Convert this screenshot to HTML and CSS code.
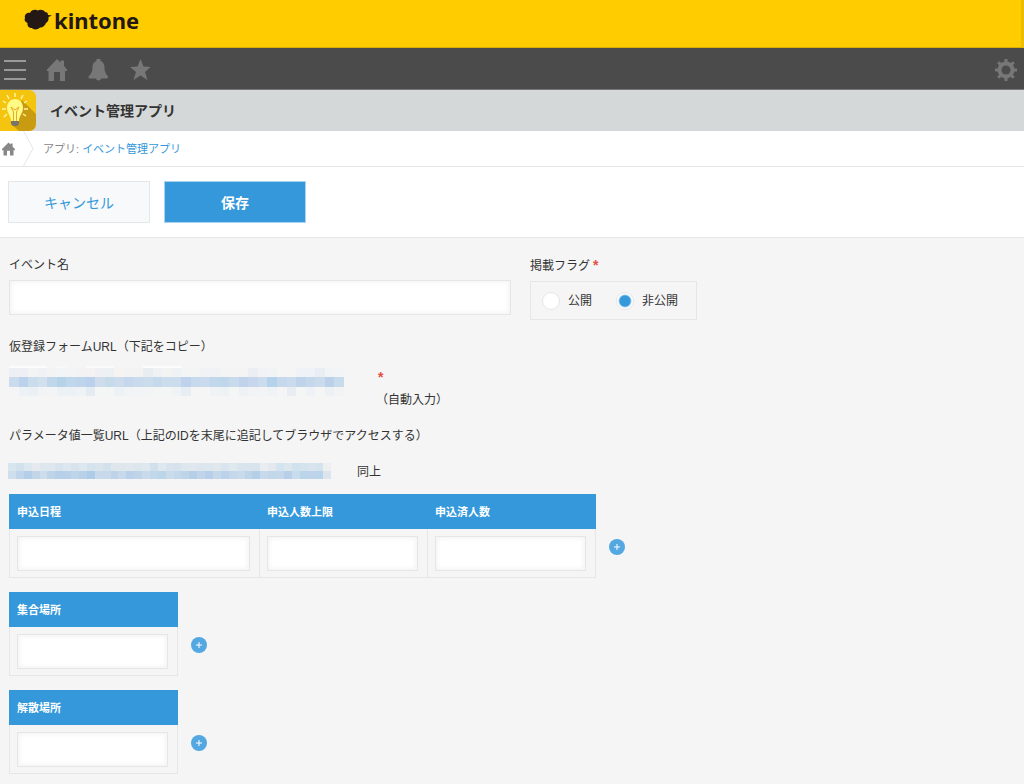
FILE: index.html
```html
<!DOCTYPE html>
<html lang="ja">
<head>
<meta charset="utf-8">
<title>イベント管理アプリ - kintone</title>
<link rel="stylesheet" href="styles.css">
</head>
<body>
<header class="brand">
  <a class="logo" href="#">
    <svg class="cloud" width="28" height="22" viewBox="0 0 28 22" aria-hidden="true"><path d="M1 9C0 6 3 3 6 4C7 1 11 0 14 1.500C16 0 20 1 21 3C23 3 24 4 24 6L28 6.500L24.500 8C25 10 24 13 22 14C21 17 18 19 16 18.500C14 21 9 21 8 19C5 19 3 17 3.500 14C1 13 0 11 1 9Z"/></svg>
    <span>kintone</span>
  </a>
</header>
<nav class="toolbar" aria-label="メイン">
  <div class="tools">
    <button class="tool" type="button" aria-label="メニュー"><svg class="menu" width="22" height="22" viewBox="0 0 22 22"><path d="M0 2H22M0 11H22M0 20H22"/></svg></button>
    <button class="tool" type="button" aria-label="ホーム"><svg width="22" height="22" viewBox="0 0 22 22"><path d="M11 0L14.500 3.500V1.500H18V7L21 10.500V12H19V22H14V13H8V22H2.500V12H1V10.500Z"/></svg></button>
    <button class="tool" type="button" aria-label="通知"><svg width="22" height="22" viewBox="0 0 22 22"><path d="M8.500 2V0H12.500V2C16 3.500 16.500 6 16.500 9C16.500 13 18 15 20 17.500Q20.500 19.500 18.500 19.500H13Q13 21.500 10.500 21.500Q8 21.500 8 19.500H2Q0 19.500 .5 17.500C3 15 4.500 13 4.500 9C4.500 6 5 3.500 8.500 2Z"/></svg></button>
    <button class="tool" type="button" aria-label="お気に入り"><svg width="22" height="22" viewBox="0 0 22 22"><path d="M10.500 0L13.500 7.500L20.500 8L15 13L17.500 21L10.500 16.500L3.500 21L6 13L0 8L7.500 7.500Z"/></svg></button>
  </div>
  <button class="tool" type="button" aria-label="設定"><svg width="22" height="22" viewBox="0 0 22 22"><path d="M9.500 0H12.500V22H9.500ZM0 9.500H22V12.500H0Z"/><path d="M9.500 0H12.500V22H9.500ZM0 9.500H22V12.500H0Z" transform="rotate(45 11 11)"/><circle cx="11" cy="11" r="8.500"/><circle class="hole" cx="11" cy="11" r="4.500"/></svg></button>
</nav>
<div class="app-head">
  <svg class="app-icon" width="36" height="41" viewBox="0 0 36 41" aria-hidden="true"><path fill="#f4c40f" d="M0 0H28Q36 0 36 8V33Q36 41 28 41H0Z"/><path fill="#c99b10" d="M22 10L36 24V33Q36 41 28 41H19L12 35Z"/><path fill="none" stroke="#fff3a0" stroke-width="1.500" d="M15 3V7M7 5L9 9M23 5L21 9M3 11L6 13M27 11L24 13M2 19H6M24 19H28M4 27L7 24M26 26L23 24"/><path fill="#fff985" d="M15 9C10 9 7 13 7 18C7 23 11 26 11 31H19C19 26 23 23 23 18C23 13 20 9 15 9Z"/><path fill="none" stroke="#e5ad26" d="M13.500 31V22L11 17L15 20L19 17L16.500 22V31"/><path fill="#777468" d="M11 31H19V34L17 36H13L11 34Z"/></svg>
  <h1>イベント管理アプリ</h1>
</div>
<nav class="crumbs" aria-label="パンくず">
  <a class="home" href="#" aria-label="ホーム"><svg width="13" height="14" viewBox="0 0 22 22"><path d="M11 0L14.500 3.500V1.500H18V7L22 11V13H19.500V22H13.500V14H8.500V22H2.500V13H0V11Z"/></svg></a>
  <svg class="chevron" width="12" height="35" viewBox="0 0 12 35" aria-hidden="true"><path d="M.5 0L10 17.500L.5 35"/></svg>
  <span>アプリ: <a href="#">イベント管理アプリ</a></span>
</nav>
<form>
  <div class="actions">
    <button class="btn" type="button">キャンセル</button>
    <button class="btn primary" type="submit">保存</button>
  </div>
  <main class="record">
    <div class="row top">
      <div class="field name">
        <label for="ev">イベント名</label>
        <input class="text" id="ev" type="text">
      </div>
      <fieldset class="field flag">
        <legend>掲載フラグ<span class="req">*</span></legend>
        <div class="radios">
          <label><input type="radio" name="flag">公開</label>
          <label><input type="radio" name="flag" checked>非公開</label>
        </div>
      </fieldset>
    </div>
    <p class="caption">仮登録フォームURL（下記をコピー）</p>
    <div class="row auto">
      <svg id="m1" width="346" height="32" viewBox="0 0 346 32" aria-hidden="true"></svg>
      <div class="auto-note"><span class="req">*</span><span>（自動入力）</span></div>
    </div>
    <p class="caption">パラメータ値一覧URL（上記のIDを末尾に追記してブラウザでアクセスする）</p>
    <div class="row same">
      <svg id="m2" width="332" height="24" viewBox="0 0 332 24" aria-hidden="true"></svg>
      <span>同上</span>
    </div>
    <div class="sub">
      <table>
        <thead><tr><th class="wide" id="h1">申込日程</th><th id="h2">申込人数上限</th><th id="h3">申込済人数</th></tr></thead>
        <tbody><tr><td><input class="text" type="text" aria-labelledby="h1"></td><td><input class="text" type="text" aria-labelledby="h2"></td><td><input class="text" type="text" aria-labelledby="h3"></td></tr></tbody>
      </table>
      <button class="add" type="button" aria-label="行を追加"><svg width="16" height="16" viewBox="0 0 16 16"><path d="M8 5V11M5 8H11"/></svg></button>
    </div>
    <div class="sub">
      <table>
        <thead><tr><th class="single" id="h4">集合場所</th></tr></thead>
        <tbody><tr><td><input class="text" type="text" aria-labelledby="h4"></td></tr></tbody>
      </table>
      <button class="add" type="button" aria-label="行を追加"><svg width="16" height="16" viewBox="0 0 16 16"><path d="M8 5V11M5 8H11"/></svg></button>
    </div>
    <div class="sub">
      <table>
        <thead><tr><th class="single" id="h5">解散場所</th></tr></thead>
        <tbody><tr><td><input class="text" type="text" aria-labelledby="h5"></td></tr></tbody>
      </table>
      <button class="add" type="button" aria-label="行を追加"><svg width="16" height="16" viewBox="0 0 16 16"><path d="M8 5V11M5 8H11"/></svg></button>
    </div>
  </main>
</form>
<script src="mosaic.js"></script>
</body>
</html>
```
FILE: styles.css
```css
* { box-sizing: border-box; }
body {
  margin: 0;
  min-height: 100vh;
  background: #f5f5f5;
  color: #333;
  font: 12px/20px "Liberation Sans", "Noto Sans CJK JP", sans-serif;
}
svg { display: block; flex: none; }
a { color: #3498db; text-decoration: none; }
button { font: inherit; cursor: pointer; }
.brand {
  height: 48px;
  padding: 8px 24px;
  background: #ffcc00;
  border-right: 3px solid #edbd04;
  border-bottom: 1px solid #d9ae08;
}
.logo {
  display: flex;
  align-items: center;
  gap: 2px;
  color: #231815;
  font: bold 22px/24px "Noto Sans", sans-serif;
}
.cloud { fill: #231815; }
.toolbar {
  display: flex;
  justify-content: space-between;
  height: 42px;
  padding: 3px 7px 0 4px;
  background: #4b4b4b;
  border-bottom: 1px solid #777;
}
.tools { display: flex; gap: 20px; }
.tool {
  padding: 0;
  border: 0;
  background: none;
  fill: #777;
}
.menu { stroke: #9a9a9a; stroke-width: 2; }
.hole { fill: #4b4b4b; }
.app-head {
  display: flex;
  align-items: center;
  gap: 14px;
  height: 41px;
  background: #d4d8d8;
}
h1 { margin: 0; font-size: 14px; line-height: 20px; }
.crumbs {
  display: flex;
  align-items: center;
  height: 36px;
  padding-left: 2px;
  background: #fff;
  border-bottom: 1px solid #e3e7e8;
  color: #888;
  font-size: 11px;
}
.home { fill: #888; }
.chevron { margin: 0 8px; fill: none; stroke: #e3e7e8; }
.actions {
  display: flex;
  gap: 14px;
  height: 71px;
  padding: 14px 8px;
  background: #fff;
  border-bottom: 1px solid #e3e7e8;
}
.btn {
  width: 142px;
  height: 42px;
  padding: 2px 0 0;
  border: 1px solid #e3e7e8;
  background: #f7f9fa;
  color: #3498db;
  font-size: 14px;
}
.primary { background: #3498db; border-color: #a9d3ee; color: #fff; font-weight: bold; }
.record { padding: 17px 9px 8px; }
.row { display: flex; }
.top { gap: 19px; }
.field { margin: 0; padding: 0; border: 0; }
.name { flex: 0 1 502px; }
.field > label, legend { display: block; height: 20px; padding: 0; margin-bottom: 5px; }
.flag legend { margin-bottom: 6px; }
.req { margin-left: 3px; color: #e74c3c; font-size: 14px; font-weight: bold; }
.text {
  display: block;
  width: 100%;
  height: 35px;
  padding: 0 8px;
  border: 1px solid #e3e7e8;
  background: #fff;
  box-shadow: inset 2px 2px 4px #f5f5f5, inset -2px -2px 4px #f5f5f5;
}
.radios {
  display: flex;
  align-items: center;
  gap: 24px;
  height: 39px;
  padding: 0 18px 0 11px;
  border: 1px solid #e3e7e8;
}
.radios label { display: flex; align-items: center; gap: 8px; }
.radios input {
  appearance: none;
  width: 18px;
  height: 18px;
  margin: 0;
  border: 1px solid #e3e7e8;
  border-radius: 50%;
  background: #fff;
}
.radios input:checked { background: radial-gradient(circle, #3498db 0 5px, #fff 7px); }
.caption { margin: 0; }
.top + .caption { margin-top: 17px; }
.auto { gap: 26px; padding-top: 9px; }
.auto-note { display: flex; flex-direction: column; line-height: 23px; padding-bottom: 14px; }
.auto-note .req { margin-left: -3px; }
.auto-note .req + span { margin-left: -5px; }
.same { align-items: center; gap: 17px; height: 32px; margin: 10px 0 6px -1px; }
.same svg { margin-bottom: 2px; }
.sub { display: flex; align-items: center; gap: 13px; margin-bottom: 14px; }
table { border-collapse: separate; border-spacing: 0; }
th {
  width: 168px;
  height: 35px;
  padding: 0 7px;
  background: #3498db;
  color: #fff;
  font-size: 11px;
  text-align: left;
}
.wide { width: 251px; }
.wide, .single { padding-left: 8px; }
.single { width: 169px; }
td {
  height: 49px;
  padding: 7px 9px 6px 7px;
  border: solid #e3e7e8;
  border-width: 0 1px 1px 0;
}
td:first-child { border-left-width: 1px; }
.add {
  width: 16px;
  height: 16px;
  margin-top: 22px;
  padding: 0;
  border: 0;
  border-radius: 50%;
  background: #53a8e2;
}
.add path { stroke: #fff; }
```
FILE: mosaic.js
```js
// Fills a redacted link with rows of coloured blocks.
function mosaic(id, total, rows) {
  const svg = document.getElementById(id);
  rows.forEach(([y, height, text]) => {
    const colors = text.split(" ");
    colors.forEach((color, i) => {
      const left = Math.round(i * total / 35);
      const right = Math.round((i + 1) * total / 35);
      const r = document.createElementNS("http://www.w3.org/2000/svg", "rect");
      r.setAttribute("x", left);
      r.setAttribute("y", y);
      r.setAttribute("width", right - left);
      r.setAttribute("height", height);
      r.setAttribute("fill", "#" + color);
      svg.appendChild(r);
    });
  });
}
mosaic("m1", 335, [
  [0, 2, "fcfcfc fcfcfc fcfcfc fcfcfc f5f5f5 f9f9f9 f5f5f5 f5f5f5 fbfafa fbfafa fbfafa f5f5f5 f5f5f5 f5f5f5 fbfcfc fbfcfc fbfcfc fbfcfc"],
  [2, 9, "eeeff4 eeeff4 f4f3f4 eff1f4 f4f3f3 f2f4f5 f3f4f5 f3f3f3 f4f2f3 eef0f4 eef1f4 f6f3f2 f3f3f4 f3f3f4 e8edf2 eff1f4 f2f3f3 eff2f4 f3f5f5 f3f5f5 f0f2f5 f0f2f5 f4f4f5 f4f4f5 f4f4f5 eceef4 f1f2f4 f2f3f4 f5f5f5 f5f5f5 eff2f6 eff2f6 e9edf4 f1f4f6 f3f4f5"],
  [11, 10, "cadbed bcd2eb cbdcec d2dfec c0d7eb b5d2e9 c0d6ea bdd4eb bbd0ea cfdceb c7daea cddcec c4d7ec c8daec cbdcec c4d9eb cbdded cbdcec bfd2eb c7d9ec c9daec c1d7eb c0d7eb c8daec c1d3ea c7d6ec cbdcec b4d2e9 c6d8eb cadbed bfd4eb c5d8eb cadbec bcd0ea c7dbed"],
  [21, 9, "f5f5f5 edf2f6 eaf0f4 f1f3f5 f2f4f5 ecf1f5 ecf1f5 f0f3f6 e4ebf3 f4f5f5 f4f5f5 ecf1f5 f1f3f5 f2f4f5 f3f4f5 f4f5f5 f4f5f5 f0f3f5 e8ecf3 f5f5f5 f5f5f5 f0f3f5 eff2f5 f4f5f5 eff2f5 f1f3f5 f3f4f5 eff3f6 f5f5f5 e9edf3 f4f5f5 eef1f5 f5f5f5 edf1f5 f1f3f5"]
]);
// The second link uses blocks of about eight pixels.
mosaic("m2", 276, [
  [4, 8, "d7e5ee d2e2ed dce7ef e6eaee dce7ee dfe7ee d7e4ed dce7ef d8e3ed dde7ef d5e3ee d9e4ed d2e1ec dfe7ed dfe7ed e1e8ed dce6ed dfe8ef d1e0ed dfe8ef d9e3ed d6e3ef dce7ee e0e8ed dce6ee dfe7ee e0e8ee d9e4ee dfe8ef d8e4ee d8e4ee d7e4ee e8edf2 e5e9ef d2e4ef dce6ed d0e2ee d4e3ee d9e5ee d4e4ef eeeff1"],
  [12, 8, "cedeec c0d4eb b4cde9 c1d7e8 cdddec bfd4e9 b5d0e8 b8d1e9 bfd5e9 b9d0e9 aecce8 c8d9eb c7d9eb bed3ea c8d9eb bbd0ea c0d4e9 c8daeb c3d7ea bbd5e9 cadcec c4d7eb bed4e9 b4cfe7 c1d5e9 b9ceea c5d8ea bcd1ea c5d7ea c9daea bed4e9 b4cfe8 c7d9ea c2d7ea c4d7eb b8cee9 c8dced bad4e9 bcd3e9 bad5eb dce5ed"]
]);
```
